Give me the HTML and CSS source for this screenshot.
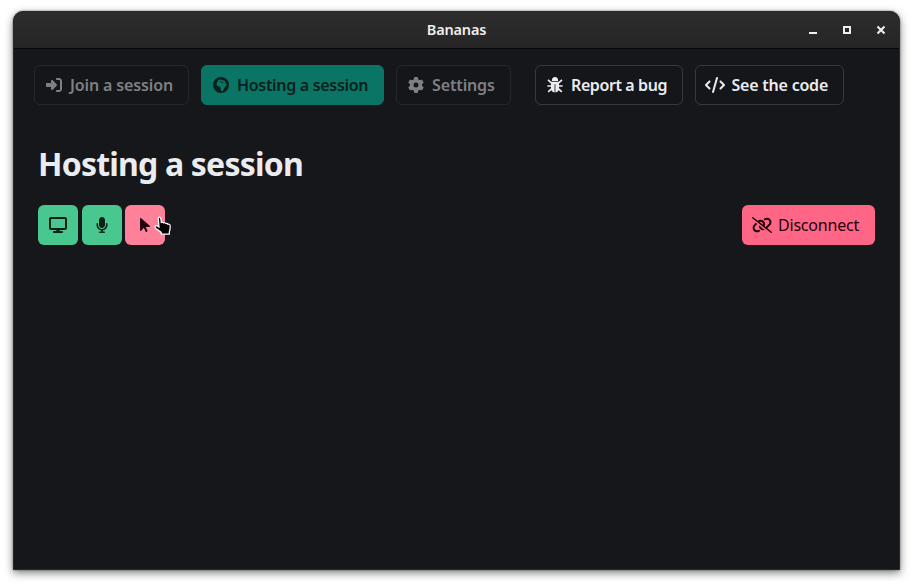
FILE: index.html
```html
<!DOCTYPE html>
<html lang="en">
<head>
<meta charset="utf-8">
<title>Bananas</title>
<link rel="stylesheet" href="styles.css">
</head>
<body>
<div class="window">
  <header class="titlebar">
    <span class="caption">Bananas</span>
    <div class="controls">
      <svg width="10" height="10" viewBox="0 0 10 10"><path d="M1 7h8v2H1z"/></svg>
      <svg width="10" height="10" viewBox="0 0 10 10"><path fill-rule="evenodd" d="M1 1h8v8H1zM3 3v4h4V3z"/></svg>
      <svg width="10" height="10" viewBox="0 0 10 10"><path d="M1.5 1.5l7 7M8.5 1.5l-7 7" stroke="#eeeeec" stroke-width="2.1"/></svg>
    </div>
  </header>
  <nav class="nav">
    <button class="button join dim">
      <svg class="icon" viewBox="0 0 512 512"><path d="M217.9 105.9L340.7 228.7c7.2 7.2 11.3 17.1 11.3 27.3s-4.1 20.1-11.3 27.3L217.9 406.1c-6.4 6.4-15 9.9-24 9.9c-18.7 0-33.9-15.2-33.9-33.9l0-62.1L32 320c-17.7 0-32-14.3-32-32l0-64c0-17.7 14.3-32 32-32l128 0 0-62.1c0-18.7 15.2-33.9 33.9-33.9c9 0 17.6 3.6 24 9.9zM352 416l64 0c17.7 0 32-14.3 32-32l0-256c0-17.7-14.3-32-32-32l-64 0c-17.7 0-32-14.3-32-32s14.3-32 32-32l64 0c53 0 96 43 96 96l0 256c0 53-43 96-96 96l-64 0c-17.7 0-32-14.3-32-32s14.3-32 32-32z"/></svg>
      <span>Join a session</span>
    </button>
    <button class="button host">
      <svg class="icon" viewBox="0 0 16 16"><path fill-rule="evenodd" d="M8 0a8 8 0 1 0 0 16A8 8 0 0 0 8 0zM5.2 3.300L7.2 2.400l1.800.3.5.8 1.700.1 1.200 1.100.4 1.700 1.100.9-.3 1.300-1.300.5-.5 1.500-.9 1.200-.4 1.300-1.200 1.200-1.200-.3-.3-1.500-.3-1.600-.3-1.200-1.300-.3-1.500-.5-.8-1.500.2-1.600 1-1.300zM7.100 4.300l-.4.6 1.500.4 1 .8 1.200-.2-.4-.8-1.300-.2-.4-.6z"/></svg>
      <span>Hosting a session</span>
    </button>
    <button class="button settings dim">
      <svg class="icon" viewBox="0 0 512 512"><path d="M495.9 166.6c3.2 8.7 .5 18.4-6.4 24.6l-43.3 39.4c1.1 8.3 1.7 16.8 1.7 25.4s-.6 17.1-1.7 25.4l43.3 39.4c6.9 6.2 9.6 15.9 6.4 24.6c-4.4 11.9-9.7 23.3-15.8 34.3l-4.7 8.1c-6.6 11-14 21.4-22.1 31.2c-5.9 7.2-15.7 9.6-24.5 6.8l-55.7-17.7c-13.4 10.3-28.2 18.9-44 25.4l-12.5 57.1c-2 9.1-9 16.3-18.2 17.8c-13.8 2.3-28 3.5-42.5 3.5s-28.7-1.2-42.5-3.5c-9.2-1.5-16.2-8.7-18.2-17.8l-12.5-57.1c-15.8-6.5-30.6-15.1-44-25.4L83.1 425.9c-8.8 2.8-18.6 .3-24.5-6.8c-8.1-9.8-15.5-20.2-22.1-31.2l-4.7-8.1c-6.1-11-11.4-22.4-15.8-34.3c-3.2-8.7-.5-18.4 6.4-24.6l43.3-39.4C64.6 273.1 64 264.6 64 256s.6-17.1 1.7-25.4L22.4 191.2c-6.9-6.2-9.6-15.9-6.4-24.6c4.4-11.9 9.7-23.3 15.8-34.3l4.7-8.1c6.6-11 14-21.4 22.1-31.2c5.9-7.2 15.7-9.6 24.5-6.8l55.7 17.7c13.4-10.3 28.2-18.9 44-25.4l12.5-57.1c2-9.1 9-16.3 18.2-17.8C227.3 1.2 241.5 0 256 0s28.7 1.2 42.5 3.5c9.2 1.5 16.2 8.7 18.2 17.8l12.5 57.1c15.8 6.5 30.6 15.1 44 25.4l55.7-17.7c8.8-2.8 18.6-.3 24.5 6.8c8.1 9.8 15.5 20.2 22.1 31.2l4.7 8.1c6.1 11 11.4 22.4 15.8 34.3zM256 336a80 80 0 1 0 0-160 80 80 0 1 0 0 160z"/></svg>
      <span>Settings</span>
    </button>
    <button class="button report">
      <svg class="icon" viewBox="0 0 16 16"><path d="M4.900 3.600a3.100 3.500 0 0 1 6.200 0v.5H4.900zM4 4.800h8v6.500a4 4.200 0 0 1-3.600 4.200V7.200h-.8v8.300a4 4.200 0 0 1-3.600-4.200z"/><path class="legs" d="M1 2.900l3.600 3.300M15 2.900l-3.600 3.300M.4 9h4.400M15.600 9h-4.400M1.200 14.900l3.500-3.200M14.800 14.900l-3.500-3.200"/></svg>
      <span>Report a bug</span>
    </button>
    <button class="button code">
      <svg class="icon wide" viewBox="0 0 640 512"><path d="M392.8 1.2c-17-4.9-34.7 5-39.6 22l-128 448c-4.9 17 5 34.7 22 39.6s34.7-5 39.6-22l128-448c4.9-17-5-34.7-22-39.6zm80.6 120.1c-12.5 12.5-12.5 32.8 0 45.3L562.7 256l-89.4 89.4c-12.5 12.5-12.5 32.8 0 45.3s32.8 12.5 45.3 0l112-112c12.5-12.5 12.5-32.8 0-45.3l-112-112c-12.5-12.5-32.8-12.5-45.3 0zm-306.7 0c-12.5-12.5-32.8-12.5-45.3 0l-112 112c-12.5 12.5-12.5 32.8 0 45.3l112 112c12.5 12.5 32.8 12.5 45.3 0s12.5-32.8 0-45.3L77.3 256l89.4-89.4c12.5-12.5 12.5-32.8 0-45.3z"/></svg>
      <span>See the code</span>
    </button>
  </nav>
  <main class="content">
    <h1><span>Hosting a session</span></h1>
    <div class="toolbar">
      <div class="tools">
        <button class="tool" aria-label="Display"><svg width="18" height="16" viewBox="0 0 576 512"><path d="M64 0C28.7 0 0 28.7 0 64L0 352c0 35.3 28.7 64 64 64l176 0-10.7 32L160 448c-17.7 0-32 14.3-32 32s14.3 32 32 32l256 0c17.7 0 32-14.3 32-32s-14.3-32-32-32l-69.3 0L336 416l176 0c35.3 0 64-28.7 64-64l0-288c0-35.3-28.7-64-64-64L64 0zM512 64l0 288L64 352 64 64l448 0z"/></svg></button>
        <button class="tool" aria-label="Microphone"><svg width="12" height="16" viewBox="0 0 384 512"><path d="M192 0C139 0 96 43 96 96l0 160c0 53 43 96 96 96s96-43 96-96l0-160c0-53-43-96-96-96zM64 216c0-13.3-10.7-24-24-24s-24 10.7-24 24l0 40c0 89.1 66.2 162.7 152 174.4l0 33.6-48 0c-13.3 0-24 10.7-24 24s10.7 24 24 24l72 0 72 0c13.3 0 24-10.7 24-24s-10.7-24-24-24l-48 0 0-33.6c85.8-11.7 152-85.3 152-174.4l0-40c0-13.3-10.7-24-24-24s-24 10.7-24 24l0 40c0 70.7-57.3 128-128 128s-128-57.3-128-128l0-40z"/></svg></button>
        <button class="tool pointer" aria-label="Cursor"><svg width="10" height="16" viewBox="0 0 320 512"><path d="M0 55.2L0 426c0 12.2 9.9 22 22 22c6.3 0 12.4-2.7 16.6-7.5L121.2 346l58.1 116.3c7.9 15.8 27.1 22.2 42.9 14.3s22.2-27.1 14.3-42.9L179.8 320l118.1 0c12.2 0 22.1-9.9 22.1-22.1c0-6.3-2.7-12.3-7.4-16.5L38.6 37.9C34.3 34.1 28.9 32 23.2 32C10.4 32 0 42.4 0 55.2z"/></svg>
          <svg class="hand" width="18" height="20" viewBox="0 0 18 20"><path d="M4.300 2.300c0-1.500 2.300-1.500 2.500 0l.5 4.200c.8-.5 1.900-.3 2.300.4.800-.4 1.800-.2 2.200.6.900-.3 1.800 0 2.100.7 1.200-.3 2.300.3 2.300 1.600 0 2.500.1 4.300-.9 5.900v2.500H7.200v-1.800L2.300 12.700C1.200 11.800.6 11 1.100 10.200c.6-.8 1.700-.6 2.700 0l1.200.8z"/></svg>
        </button>
      </div>
      <button class="disconnect">
        <svg width="20" height="16" viewBox="0 0 640 512"><path d="M38.8 5.1C28.4-3.1 13.3-1.2 5.1 9.2S-1.2 34.7 9.2 42.9l592 464c10.4 8.2 25.5 6.3 33.7-4.1s6.3-25.5-4.1-33.7L489.3 358.2l90.5-90.5c56.5-56.5 56.5-148 0-204.5c-50-50-128.8-56.5-186.3-15.4l-1.600 1.100c-14.400 10.300-17.700 30.300-7.400 44.600s30.300 17.700 44.600 7.400l1.600-1.100c32.100-22.900 76-19.300 103.800 8.600c31.500 31.500 31.500 82.500 0 114l-96 96-31.900-25C430.900 239.600 420.100 175.100 376 131c-52.500-52.500-134.200-55.800-190.500-9.700L38.800 5.100zM239 162c30.100-14.900 67.700-9.900 92.800 15.300c20 20 27.500 48.300 21.700 74.500L239 162zM116.600 187.900L60.200 244.300c-56.500 56.500-56.500 148 0 204.500c50 50 128.800 56.500 186.300 15.400l1.600-1.100c14.400-10.300 17.700-30.300 7.400-44.600s-30.300-17.700-44.600-7.400l-1.600 1.100c-32.100 22.900-76 19.300-103.800-8.600C74 372 74 321 105.500 289.500l61.800-61.800-50.700-39.800zM220.900 270c-2.100 39.800 12.200 80.100 42.200 110c38.900 38.900 94.400 51 143.600 36.300l-62-48.800c-13.900-4.500-26.900-12.200-37.700-23-10.400-10.400-17.500-22.800-21.300-36L220.900 270z"/></svg>
        <span>Disconnect</span>
      </button>
    </div>
  </main>
</div>
</body>
</html>
```
FILE: styles.css
```css
* { box-sizing: border-box; }
body {
  margin: 0;
  padding: 11px 13px 16px;
  height: 586px;
  background: #fff;
  font-family: "Noto Sans", "Open Sans", sans-serif;
  overflow: hidden;
}
.window {
  height: 559px;
  background: #16171b;
  border: 1px solid #292929;
  border-radius: 10px 10px 0 0;
  box-shadow: 0 3px 9px rgba(0, 0, 0, .5), 0 0 2px rgba(0, 0, 0, .5);
}
.titlebar {
  height: 37px;
  display: grid;
  grid-template-columns: 1fr auto 1fr;
  align-items: center;
  background: linear-gradient(#2d2d2d, #252525);
  border-bottom: 1px solid #070707;
  border-radius: 9px 9px 0 0;
}
.caption {
  grid-column: 2;
  color: #eeeeec;
  font-size: 14.5px;
  font-weight: 600;
  line-height: 34px;
  padding-bottom: 2px;
  letter-spacing: -.2px;
}
.controls {
  display: flex;
  justify-content: flex-end;
  gap: 24px;
  padding-right: 13px;
  fill: #eeeeec;
}
.nav {
  display: flex;
  gap: 12px;
  padding: 16px 20px 0;
}
button {
  margin: 0;
  font: inherit;
  color: inherit;
  border: 0;
}
button span, h1 span { white-space: nowrap; }
.button {
  height: 40px;
  display: flex;
  align-items: center;
  gap: 8px;
  padding: 0 0 0 11px;
  border: 1px solid #363844;
  border-radius: 6px;
  background: #14161a;
  color: #ebecf0;
  fill: currentColor;
  font-size: 16px;
  font-weight: 600;
}
.icon { width: 16px; height: 16px; flex: none; }
.wide { width: 20px; }
.legs { stroke: currentColor; stroke-width: 1.7; }
.join { width: 155px; letter-spacing: -.13px; }
.host { width: 183px; background: #0a7564; border-color: #0a7564; color: #08201d; letter-spacing: -.31px; }
.settings { width: 115px; margin-right: 12px; letter-spacing: -.13px; }
.report { width: 148px; letter-spacing: -.4px; }
.code { width: 149px; padding-left: 9px; gap: 6.5px; letter-spacing: -.22px; }
.dim { color: #7f8083; border-color: #26272e; }
.content { padding: 41px 24px 0; }
h1 {
  margin: 0 0 23px;
  font-size: 32px;
  line-height: 36px;
  font-weight: 700;
  letter-spacing: -.8px;
  color: #ebecf0;
}
.toolbar { display: flex; justify-content: space-between; }
.tools { display: flex; gap: 3.6px; }
.tool {
  position: relative;
  width: 40px;
  height: 40px;
  padding: 0;
  display: flex;
  align-items: center;
  justify-content: center;
  border-radius: 6px;
  background: #48c78e;
  fill: #0a2118;
}
.pointer { background: #ff8199; fill: #23000a; }
.hand {
  position: absolute;
  left: 29px;
  top: 11px;
  fill: #000;
  stroke: #fff;
  stroke-width: 1.2;
}
.disconnect {
  width: 133px;
  height: 40px;
  display: flex;
  align-items: center;
  gap: 6px;
  padding: 0 0 0 10px;
  border-radius: 6px;
  background: #ff6685;
  color: #25000a;
  font-size: 16px;
  letter-spacing: -.2px;
}
.disconnect svg { flex: none; fill: currentColor; }
```
